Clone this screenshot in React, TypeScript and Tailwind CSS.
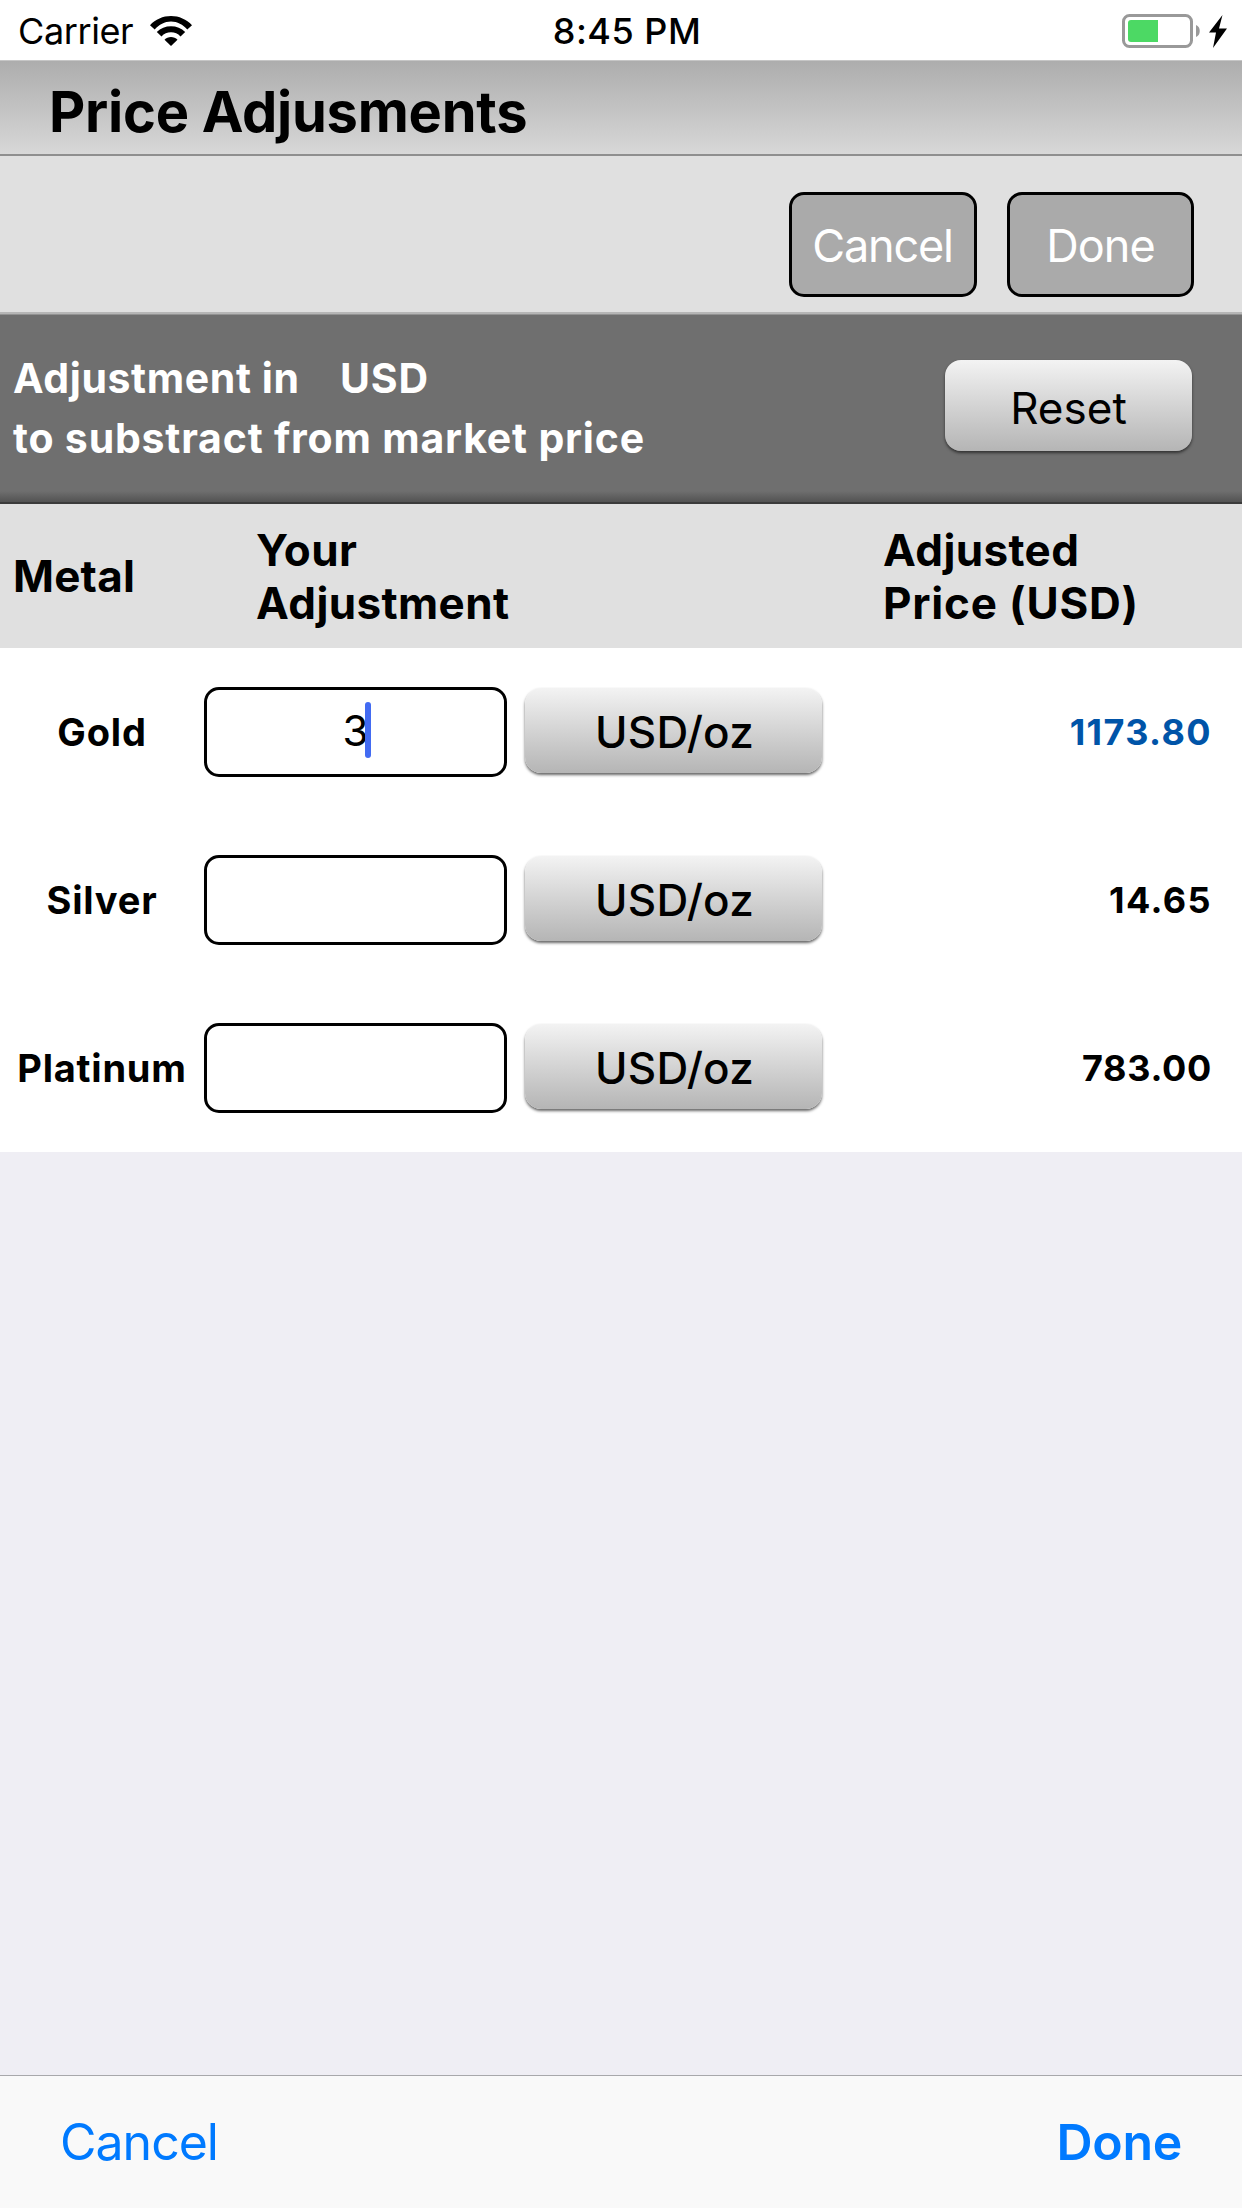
import { useState } from "react";
import clsx from "clsx";

type MetalRow = {
	name: string;
	adjustment: string;
	price: string;
	priceClass: string;
	active?: boolean;
};

const METALS: MetalRow[] = [
	{
		name: "Gold",
		adjustment: "3",
		price: "1173.80",
		priceClass: "tracking-[1.4px] text-[#0054a8]",
		active: true,
	},
	{
		name: "Silver",
		adjustment: "",
		price: "14.65",
		priceClass: "tracking-[1.4px]",
	},
	{
		name: "Platinum",
		adjustment: "",
		price: "783.00",
		priceClass: "tracking-[0.7px]",
	},
];

function WifiIcon() {
	return (
		<svg className="ml-[17px] h-[30px] w-[42px]" viewBox="0 0 42 30">
			<path d="M0 9.200C5.500 3.300 13 0 21 0s15.500 3.300 21 9.200l-4.700 4.300C33 8.500 27.300 5.500 21 5.500S9 8.500 4.700 13.500z" />
			<path d="M6.800 16C10.500 12.200 15.600 10.200 21 10.200s10.500 2 14.200 5.800l-4.700 4.400c-2.500-2.600-5.800-4.100-9.500-4.100s-7 1.500-9.500 4.100z" />
			<path d="M14.500 23.700C16.200 21.900 18.500 20.900 21 20.900s4.800 1 6.500 2.800L21 30z" />
		</svg>
	);
}

function BatteryIcon() {
	return (
		<svg className="h-[34px] w-[106px]" viewBox="0 0 106 34">
			<rect
				x="1.500"
				y="1.500"
				width="68"
				height="31"
				rx="6"
				fill="none"
				stroke="#999"
				strokeWidth="3"
			/>
			<path d="M9 6h27v22H9a3 3 0 0 1-3-3V9a3 3 0 0 1 3-3z" fill="#4cd964" />
			<path d="M74 11c5 1.500 5 10.500 0 12z" fill="#999" />
			<path d="M100.500 1L87 18.500h7L91 34l14-19.500h-8z" />
		</svg>
	);
}

function StatusBar() {
	return (
		<div className="flex h-[60px] items-center bg-white pt-[2px] text-[36px]">
			<div className="flex flex-1 items-center pl-[18px]">
				<span className="tracking-[-0.4px]">Carrier</span>
				<WifiIcon />
			</div>
			<span className="pl-[8px] font-medium tracking-[0.5px]">8:45 PM</span>
			<div className="flex flex-1 justify-end pr-[14px]">
				<BatteryIcon />
			</div>
		</div>
	);
}

function GlossyButton({
	children,
	className,
}: {
	children: string;
	className?: string;
}) {
	return (
		<button
			className={clsx(
				"rounded-[16px] bg-linear-to-b from-[#f3f3f3] to-[#b5b5b5]",
				className
			)}
		>
			{children}
		</button>
	);
}

export default function App() {
	const [values, setValues] = useState(METALS.map((m) => m.adjustment));

	return (
		<div className="flex h-[2208px] w-[1242px] flex-col overflow-hidden bg-[#efeef4] font-['Inter',sans-serif] leading-none text-black">
			<StatusBar />

			<div className="flex h-[96px] items-center border-t border-b-2 border-t-[#c6c6c6] border-b-[#8f8f8f] bg-linear-to-b from-[#adadad] to-[#d8d8d8] pt-[9px] pl-[49px]">
				<h1 className="text-[56px] font-bold tracking-[-0.25px]">
					Price Adjusments
				</h1>
			</div>

			<div className="flex h-[156px] items-start justify-end gap-[30px] bg-[#e0e0e0] pt-[36px] pr-[48px] text-[45px] text-white">
				<button className="h-[105px] w-[188px] rounded-[15px] border-3 border-black bg-[#aaa] pt-[2px] pr-px tracking-[-1.2px]">
					Cancel
				</button>
				<button className="h-[105px] w-[187px] rounded-[15px] border-3 border-black bg-[#aaa] pt-[2px] tracking-[-1px]">
					Done
				</button>
			</div>

			<div className="h-[3px] border-b border-[#929292] bg-[#b6b6b6]" />
			<div className="flex h-[189px] flex-col bg-[#6f6f6f]">
				<div className="flex flex-1 items-center justify-between pt-[10px] pr-[50px] pl-[13px]">
					<div className="text-[41px] leading-[60px] font-bold tracking-[0.8px] text-white">
						<p className="flex">
							<span className="w-[327px] tracking-[0.6px]">Adjustment in</span>
							<span>USD</span>
						</p>
						<p>to substract from market price</p>
					</div>
					<GlossyButton className="mb-[5px] h-[91px] w-[247px] pt-[5px] text-[44px] shadow-[0_2px_3px_#333]">
						Reset
					</GlossyButton>
				</div>
				<div className="h-[13px] border-b-2 border-[#3b3b3b] bg-linear-to-b from-[#6f6f6f] to-[#535353]" />
			</div>

			<div className="flex h-[144px] items-center bg-[#e0e0e0] pt-px text-[44px] leading-[53px] font-bold tracking-[0.4px]">
				<span className="w-[256px] pl-[13px] tracking-[0.2px]">Metal</span>
				<span className="w-[627px]">
					Your
					<br />
					Adjustment
				</span>
				<span>
					Adjusted
					<br />
					<span className="tracking-[0.8px]">Price (USD)</span>
				</span>
			</div>

			<div className="bg-white">
				{METALS.map((metal, i) => (
					<div key={metal.name} className="flex h-[168px] items-center">
						<span className="w-[204px] text-center text-[38px] font-bold tracking-[0.8px]">
							{metal.name}
						</span>
						<label className="relative flex h-[90px] w-[303px] items-center justify-center rounded-[15px] border-3 border-black">
							<input
								className="w-full pb-[4px] text-center text-[42px] outline-none"
								value={values[i]}
								onChange={(e) =>
									setValues(values.map((v, n) => (n === i ? e.target.value : v)))
								}
							/>
							{metal.active && (
								<span className="absolute top-[12px] left-[158px] h-[56px] w-[6px] rounded-full bg-[#426bf2]" />
							)}
						</label>
						<GlossyButton className="mr-px mb-[3px] ml-[18px] h-[85px] w-[297px] pt-[3px] pl-[2px] text-[44px] font-medium tracking-[0.2px] shadow-[0_2px_3px_#666]">
							USD/oz
						</GlossyButton>
						<span
							className={clsx(
								"flex-1 pr-[30px] text-right text-[36px] font-bold",
								metal.priceClass
							)}
						>
							{metal.price}
						</span>
					</div>
				))}
			</div>

			<div className="mt-auto flex h-[133px] items-center justify-between border-t border-[#a8a8ab] bg-[#f9f9f9] px-[60px] text-[50px] text-[#007aff]">
				<button className="tracking-[-1px]">Cancel</button>
				<button className="font-semibold tracking-[-0.3px]">Done</button>
			</div>
		</div>
	);
}
